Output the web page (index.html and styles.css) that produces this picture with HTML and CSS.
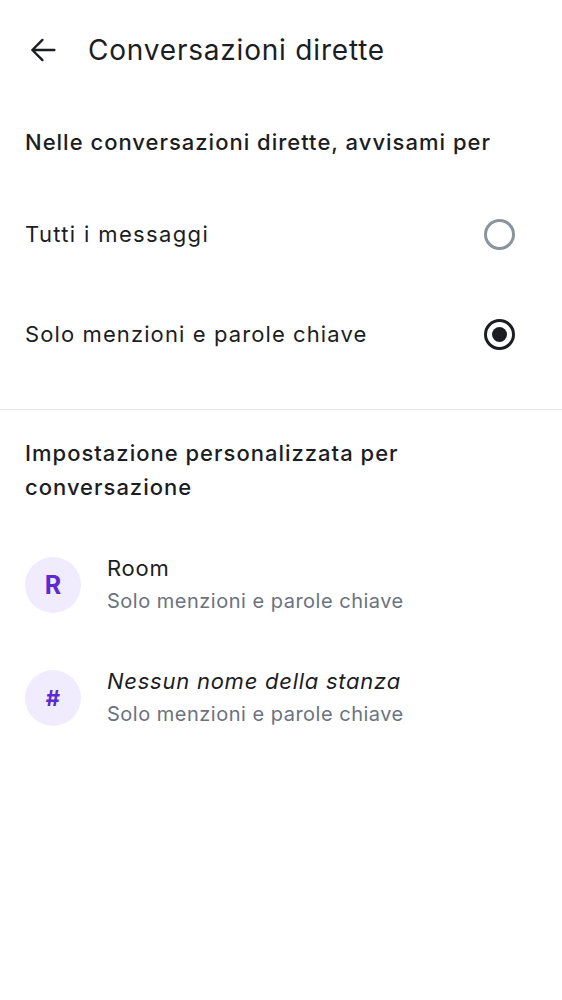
FILE: index.html
```html
<!DOCTYPE html>
<html lang="it">
<head>
<meta charset="utf-8">
<link rel="stylesheet" href="styles.css">
</head>
<body>
<div class="screen">
  <header class="topbar">
    <span class="back">
      <svg width="34" height="34" viewBox="0 0 24 24"><path d="M20 12H4.5M11.6 4.9L4.5 12l7.1 7.1" fill="none" stroke="#1b1d22" stroke-width="1.7" stroke-linecap="round" stroke-linejoin="round"/></svg>
    </span>
    <h1 class="title">Conversazioni dirette</h1>
  </header>

  <section class="section">
    <h2 class="section-title first">Nelle conversazioni dirette, avvisami per</h2>
    <div class="radio-row">
      <span class="label wide">Tutti i messaggi</span>
      <span class="radio"></span>
    </div>
    <div class="radio-row">
      <span class="label">Solo menzioni e parole chiave</span>
      <span class="radio checked"></span>
    </div>
  </section>

  <div class="divider"></div>

  <section class="section">
    <h2 class="section-title wrap">Impostazione personalizzata per conversazione</h2>
    <div class="room-row">
      <span class="avatar">R</span>
      <div class="room-text">
        <span class="room-name">Room</span>
        <span class="room-sub">Solo menzioni e parole chiave</span>
      </div>
    </div>
    <div class="room-row">
      <span class="avatar hash">#</span>
      <div class="room-text">
        <span class="room-name italic">Nessun nome della stanza</span>
        <span class="room-sub">Solo menzioni e parole chiave</span>
      </div>
    </div>
  </section>
</div>
</body>
</html>
```

FILE: styles.css
```css
* { box-sizing: border-box; margin: 0; padding: 0; }
html, body { background: #fff; }
body {
  font-family: Inter, Roboto, sans-serif;
  color: #1b1d22;
  width: 562px;
}
.screen { display: flex; flex-direction: column; }

.topbar {
  height: 100px;
  display: flex;
  align-items: center;
  padding-left: 26px;
}
.back { width: 34px; height: 34px; display: flex; }
.title {
  font-size: 28px;
  font-weight: 400;
  margin-left: 28px;
  letter-spacing: 0.8px;
}

.section-title {
  font-size: 22px;
  font-weight: 500;
  line-height: 34px;
  padding: 0 25px;
  letter-spacing: 1px;
}
.section-title.first { padding-top: 25px; padding-bottom: 25px; }
.section-title.wrap { padding-top: 26px; padding-bottom: 24px; padding-right: 120px; }

.radio-row {
  height: 100px;
  display: flex;
  align-items: center;
  justify-content: space-between;
  padding: 0 47px 0 25px;
}
.label { font-size: 22px; letter-spacing: 1.1px; }
.label.wide { letter-spacing: 1.35px; }
.radio {
  width: 31px; height: 31px;
  border-radius: 50%;
  border: 3px solid #8b939d;
  display: flex; align-items: center; justify-content: center;
}
.radio.checked { border-color: #1b1d22; }
.radio.checked::after {
  content: "";
  width: 15px; height: 15px;
  border-radius: 50%;
  background: #1b1d22;
}

.divider {
  height: 1px;
  background: #e6e7ec;
  margin-top: 25px;
}

.room-row {
  height: 113px;
  display: flex;
  align-items: center;
  padding-left: 25px;
}
.avatar {
  width: 56px; height: 56px;
  border-radius: 50%;
  background: #f0ecfd;
  color: #5b2bd0;
  font-weight: 700;
  font-size: 25px;
  display: flex; align-items: center; justify-content: center;
  flex-shrink: 0;
}
.avatar.hash { font-size: 22px; }
.room-text {
  display: flex; flex-direction: column;
  margin-left: 26px;
}
.room-name { font-size: 22px; line-height: 32px; letter-spacing: 0.75px; }
.room-name.italic { font-style: italic; }
.room-sub { font-size: 20px; color: #6b7280; line-height: 34px; letter-spacing: 0.5px; }
```
